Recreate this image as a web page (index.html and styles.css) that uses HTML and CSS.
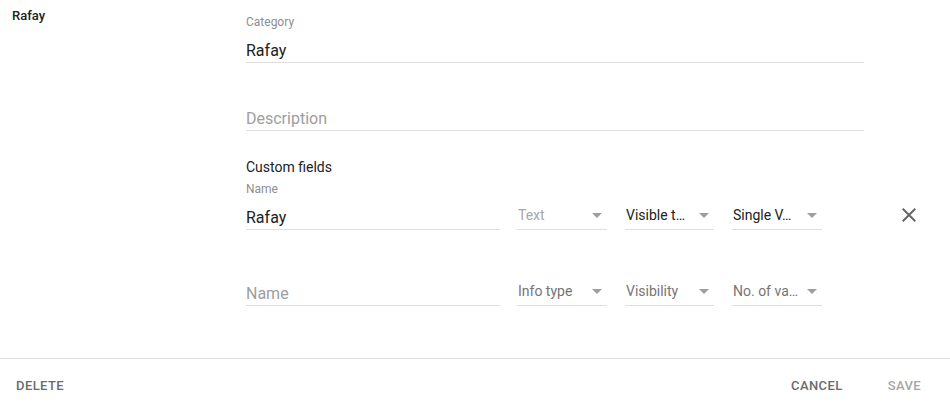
FILE: index.html
```html
<!DOCTYPE html>
<html lang="en">
<head>
    <meta charset="UTF-8">
    <meta name="viewport" content="width=device-width, initial-scale=1.0">
    <title>Edit Category</title>
    <link rel="stylesheet" href="styles.css">
</head>
<body>
    <div class="dialog">
        <div class="content">
            <aside class="side">
                <h2 class="side-title">Rafay</h2>
            </aside>
            <form class="form">
                <div class="field">
                    <label class="field-label">Category</label>
                    <input class="field-input" type="text" value="Rafay">
                </div>
                <div class="field field-spaced">
                    <label class="field-label"></label>
                    <input class="field-input" type="text" placeholder="Description">
                </div>

                <h3 class="section-title">Custom fields</h3>

                <div class="custom-row">
                    <div class="field field-name">
                        <label class="field-label">Name</label>
                        <input class="field-input" type="text" value="Rafay">
                    </div>
                    <div class="select select-muted"><span class="select-text">Text</span><svg class="select-arrow" viewBox="0 0 10 5"><path d="M0 0l5 5 5-5z"/></svg></div>
                    <div class="select select-mid"><span class="select-text">Visible t…</span><svg class="select-arrow" viewBox="0 0 10 5"><path d="M0 0l5 5 5-5z"/></svg></div>
                    <div class="select"><span class="select-text">Single V…</span><svg class="select-arrow" viewBox="0 0 10 5"><path d="M0 0l5 5 5-5z"/></svg></div>
                    <button class="remove" type="button" title="Remove field">
                        <svg viewBox="0 0 24 24"><path d="M19 6.41L17.59 5 12 10.59 6.41 5 5 6.41 10.59 12 5 17.59 6.41 19 12 13.41 17.59 19 19 17.59 13.41 12z"/></svg>
                    </button>
                </div>

                <div class="custom-row custom-row-new">
                    <div class="field field-name">
                        <label class="field-label"></label>
                        <input class="field-input" type="text" placeholder="Name">
                    </div>
                    <div class="select select-empty"><span class="select-text">Info type</span><svg class="select-arrow" viewBox="0 0 10 5"><path d="M0 0l5 5 5-5z"/></svg></div>
                    <div class="select select-mid select-empty"><span class="select-text">Visibility</span><svg class="select-arrow" viewBox="0 0 10 5"><path d="M0 0l5 5 5-5z"/></svg></div>
                    <div class="select select-empty"><span class="select-text">No. of va…</span><svg class="select-arrow" viewBox="0 0 10 5"><path d="M0 0l5 5 5-5z"/></svg></div>
                </div>
            </form>
        </div>

        <footer class="actions">
            <button class="action" type="button">Delete</button>
            <div class="actions-right">
                <button class="action" type="button">Cancel</button>
                <button class="action action-disabled" type="button" disabled>Save</button>
            </div>
        </footer>
    </div>
</body>
</html>
```

FILE: styles.css
```css
*{
    margin: 0;
    box-sizing: border-box;
}
body
{
    margin: 0;
    background-color: #ffffff;
    font-family: Roboto, "Noto Sans", Arial, sans-serif;
    color: #212121;
}
.content
{
    display: flex;
}
.side
{
    width: 246px;
    flex-shrink: 0;
    padding: 8px 12px;
}
.side-title
{
    font-size: 13px;
    line-height: 16px;
    font-weight: 500;
    color: #212121;
}
.form
{
    width: 618px;
    padding-top: 15px;
    padding-bottom: 52px;
}
.field
{
    display: flex;
    flex-direction: column;
}
.field-spaced
{
    margin-top: 20px;
}
.field-label
{
    display: block;
    height: 14px;
    font-size: 12px;
    line-height: 14px;
    color: #8e8e8e;
    margin-bottom: 11px;
}
.field-input
{
    width: 100%;
    height: 23px;
    padding: 0 0 2px 0;
    border: none;
    border-bottom: 1px solid #dedede;
    outline: none;
    font-family: inherit;
    font-size: 16px;
    line-height: 20px;
    color: #212121;
    background: transparent;
}
.field-input::placeholder
{
    color: #9e9e9e;
}
.section-title
{
    margin-top: 26px;
    font-size: 14px;
    line-height: 20px;
    font-weight: 400;
    color: #212121;
}
.custom-row
{
    display: flex;
    align-items: flex-end;
    margin-top: 5px;
}
.custom-row-new
{
    margin-top: 28px;
}
.field-name
{
    width: 254px;
    flex-shrink: 0;
}
.select
{
    position: relative;
    width: 90px;
    flex-shrink: 0;
    margin-left: 17px;
    padding: 0 24px 4px 1px;
    border-bottom: 1px solid #dedede;
    font-size: 14px;
    line-height: 20px;
    color: #212121;
}
.select-mid
{
    width: 89px;
    margin-left: 18px;
    margin-right: 1px;
}
.select-text
{
    display: block;
    white-space: nowrap;
}
.select-muted
{
    color: #a8a8a8;
}
.select-empty
{
    color: #757575;
}
.select-arrow
{
    position: absolute;
    right: 5px;
    top: 8px;
    width: 10px;
    height: 5px;
    fill: #9e9e9e;
}
.remove
{
    width: 48px;
    height: 48px;
    margin-left: 63px;
    margin-bottom: -9px;
    padding: 12px;
    border: none;
    border-radius: 50%;
    background: transparent;
    cursor: pointer;
}
.remove svg
{
    display: block;
    width: 24px;
    height: 24px;
    fill: #666666;
}
.actions
{
    display: flex;
    justify-content: space-between;
    align-items: center;
    border-top: 1px solid #dedede;
    padding: 9px 13px 0 0;
}
.actions-right
{
    display: flex;
    gap: 13px;
}
.action
{
    height: 36px;
    min-width: 64px;
    padding: 8px 16px;
    border: none;
    background: transparent;
    font-family: inherit;
    font-size: 13px;
    line-height: 20px;
    font-weight: 500;
    letter-spacing: 0.4px;
    text-transform: uppercase;
    color: #6b6b6b;
    cursor: pointer;
}
.action-disabled
{
    color: #a6a6a6;
    cursor: default;
}
```
